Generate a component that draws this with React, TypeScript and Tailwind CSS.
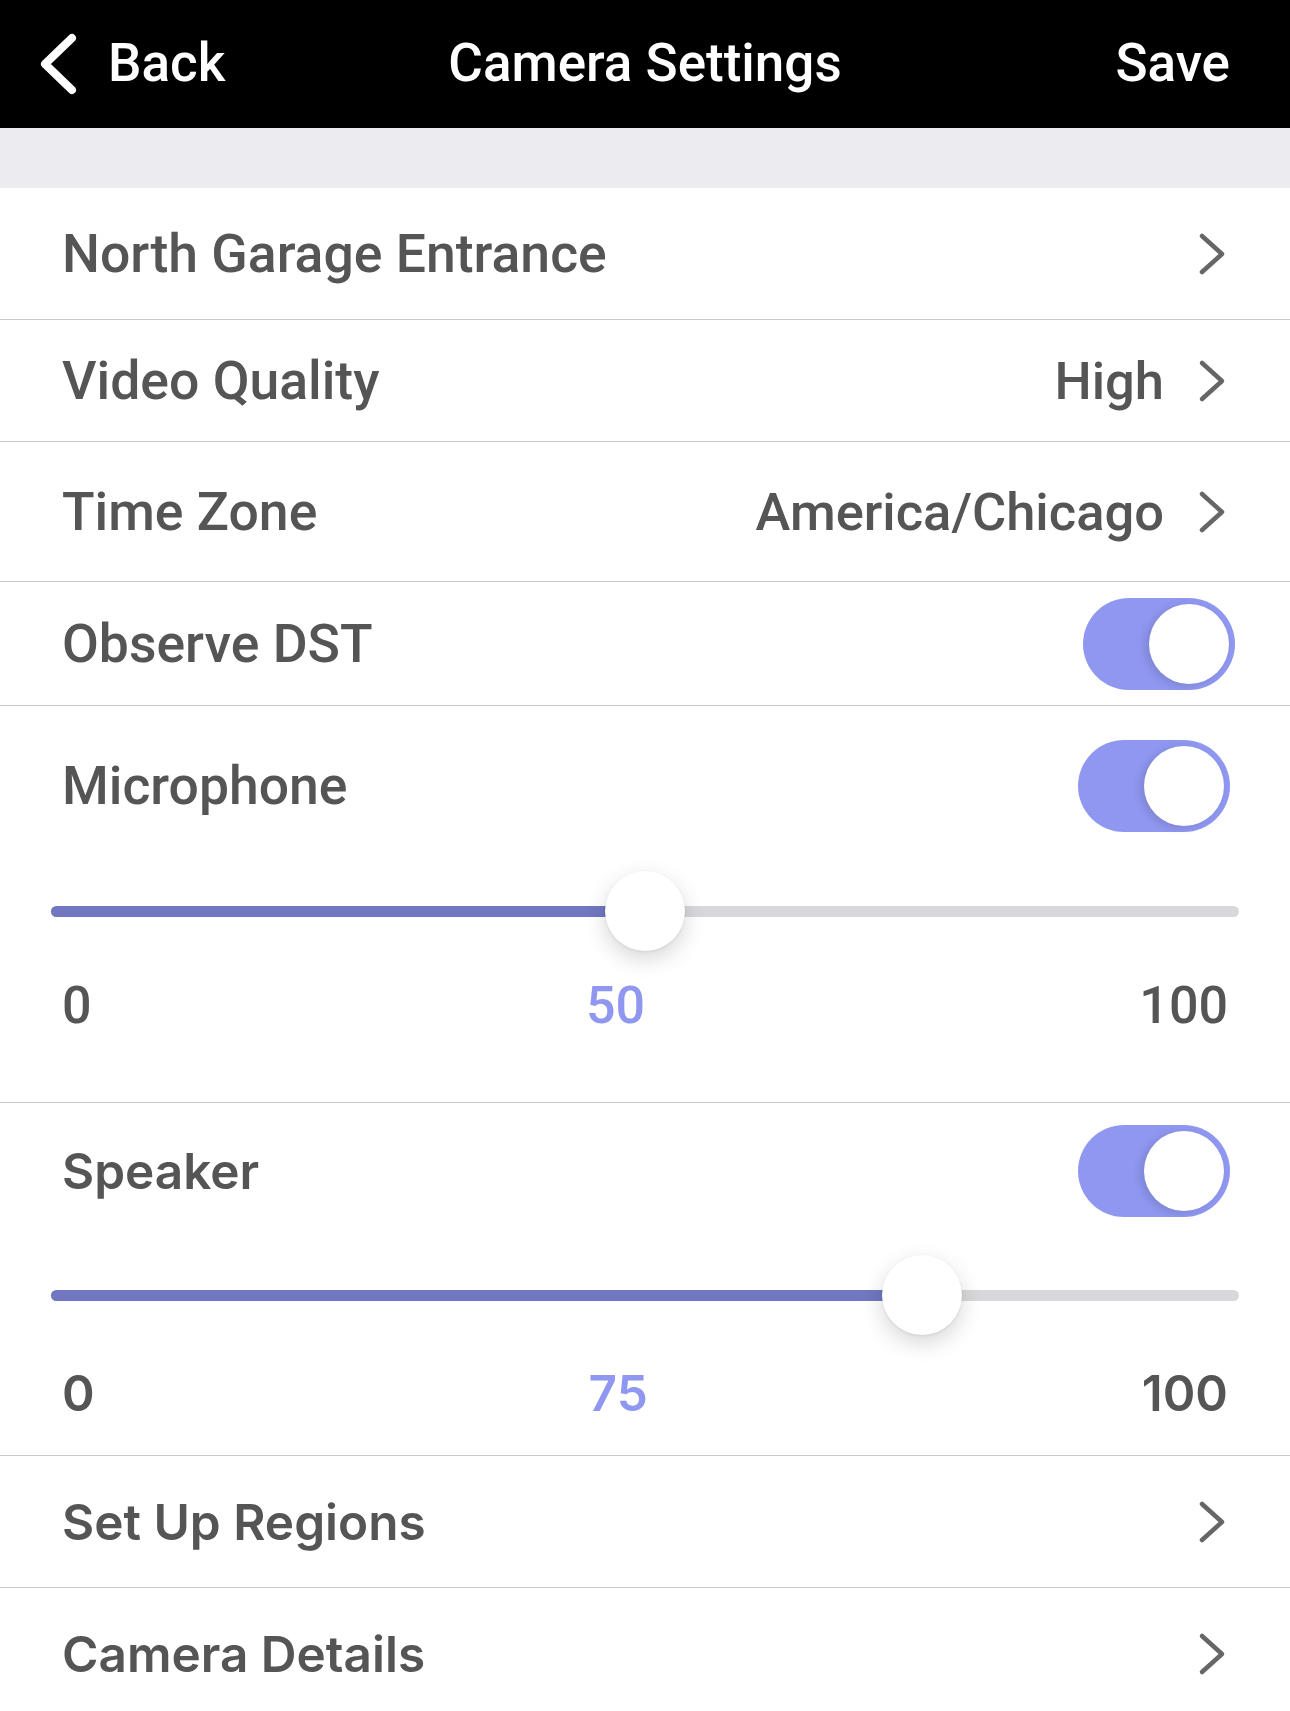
import { useState } from "react";

const rowText = "text-[53.5px] leading-[60px] font-medium text-[#555555]";
const valueText = "text-[52.5px] leading-[60px] font-medium text-[#555555]";
const numText = "text-[52px] leading-[60px] font-medium text-[#555555]";
const lowText = "text-[49.5px] leading-[60px] font-semibold text-[#555555]";

function Chevron() {
  return (
    <svg width="30" height="44" viewBox="0 0 30 44" fill="none" className="shrink-0">
      <path d="M5 4 L25 22 L5 40" stroke="#666666" strokeWidth="4.5" strokeLinecap="round" strokeLinejoin="round" />
    </svg>
  );
}

function Toggle({ on, onClick }: { on: boolean; onClick: () => void }) {
  return (
    <button
      onClick={onClick}
      className={`flex items-center w-[152px] h-[92px] rounded-full p-[6px] shrink-0 ${on ? "bg-[#8F97F0] justify-end" : "bg-[#D8D8DA] justify-start"}`}
    >
      <span className="w-[80px] h-[80px] rounded-full bg-white shadow-[-4px_2px_8px_rgba(0,0,0,0.12)]" />
    </button>
  );
}

function Slider({ value }: { value: number }) {
  // thumb center travels from r to width - r
  const pos = `calc(40px + (100% - 80px) * ${value / 100})`;
  return (
    <div className="relative h-[80px] mx-[51px]">
      <div className="absolute left-0 right-0 top-[35px] h-[11px] rounded-full bg-[#D8D8DA]" />
      <div className="absolute left-0 top-[35px] h-[11px] rounded-l-full bg-[#7177C0]" style={{ width: pos }} />
      <div
        className="absolute top-0 w-[80px] h-[80px] -ml-[40px] rounded-full bg-white shadow-[0_8px_22px_rgba(0,0,0,0.16),0_1px_3px_rgba(0,0,0,0.08)]"
        style={{ left: pos }}
      />
    </div>
  );
}

function NavRow({ label, value, h, text = rowText }: { label: string; value?: string; h: string; text?: string }) {
  return (
    <div className={`flex items-center justify-between pl-[62px] pr-[63px] border-b border-[#C8C8CC] ${h}`}>
      <span className={text}>{label}</span>
      <div className="flex items-center gap-[33px]">
        {value && <span className={valueText}>{value}</span>}
        <Chevron />
      </div>
    </div>
  );
}

export default function App() {
  const [dst, setDst] = useState(true);
  const [mic, setMic] = useState(true);
  const [spk, setSpk] = useState(true);

  return (
    <div className="w-[1290px] h-[1711px] overflow-hidden bg-white font-['Roboto',sans-serif]">
      {/* header */}
      <div className="grid grid-cols-[1fr_auto_1fr] items-center h-[128px] bg-black text-white text-[53px] font-medium">
        <div className="flex items-center pl-[38px]">
          <svg width="42" height="62" viewBox="0 0 42 62" fill="none">
            <path d="M34 5 L7 31 L34 57" stroke="white" strokeWidth="8" strokeLinecap="round" strokeLinejoin="round" />
          </svg>
          <span className="ml-[28px]">Back</span>
        </div>
        <span>Camera Settings</span>
        <span className="justify-self-end pr-[60px]">Save</span>
      </div>

      <div className="h-[60px] bg-[#EBEBF0]" />

      <NavRow label="North Garage Entrance" h="h-[132px]" />
      <NavRow label="Video Quality" value="High" h="h-[122px]" />
      <NavRow label="Time Zone" value="America/Chicago" h="h-[140px]" />

      <div className="flex items-center justify-between h-[124px] pl-[62px] pr-[55px] border-b border-[#C8C8CC]">
        <span className={rowText}>Observe DST</span>
        <Toggle on={dst} onClick={() => setDst(!dst)} />
      </div>

      {/* Microphone */}
      <div className="flex flex-col pt-[34px] pb-[66px] border-b border-[#C8C8CC]">
        <div className="flex items-center justify-between h-[92px] pl-[62px] pr-[60px]">
          <span className={rowText}>Microphone</span>
          <Toggle on={mic} onClick={() => setMic(!mic)} />
        </div>
        <div className="mt-[39px]">
          <Slider value={50} />
        </div>
        <div className={`flex justify-between mt-[25px] px-[62px] ${numText}`}>
          <span>0</span>
          <span className="text-[#8F97F0]">50</span>
          <span>100</span>
        </div>
      </div>

      {/* Speaker */}
      <div className="flex flex-col pt-[22px] pb-[32px] border-b border-[#C8C8CC] font-['Inter',sans-serif]">
        <div className="flex items-center justify-between h-[92px] pl-[62px] pr-[60px]">
          <span className={lowText}>Speaker</span>
          <Toggle on={spk} onClick={() => setSpk(!spk)} />
        </div>
        <div className="mt-[38px]">
          <Slider value={75} />
        </div>
        <div className={`flex justify-between mt-[28px] px-[62px] ${lowText}`}>
          <span>0</span>
          <span className="text-[#8F97F0]">75</span>
          <span>100</span>
        </div>
      </div>

      <div className="font-['Inter',sans-serif]">
        <NavRow label="Set Up Regions" h="h-[132px]" text={lowText} />
        <NavRow label="Camera Details" h="h-[132px]" text={lowText} />
      </div>
    </div>
  );
}
